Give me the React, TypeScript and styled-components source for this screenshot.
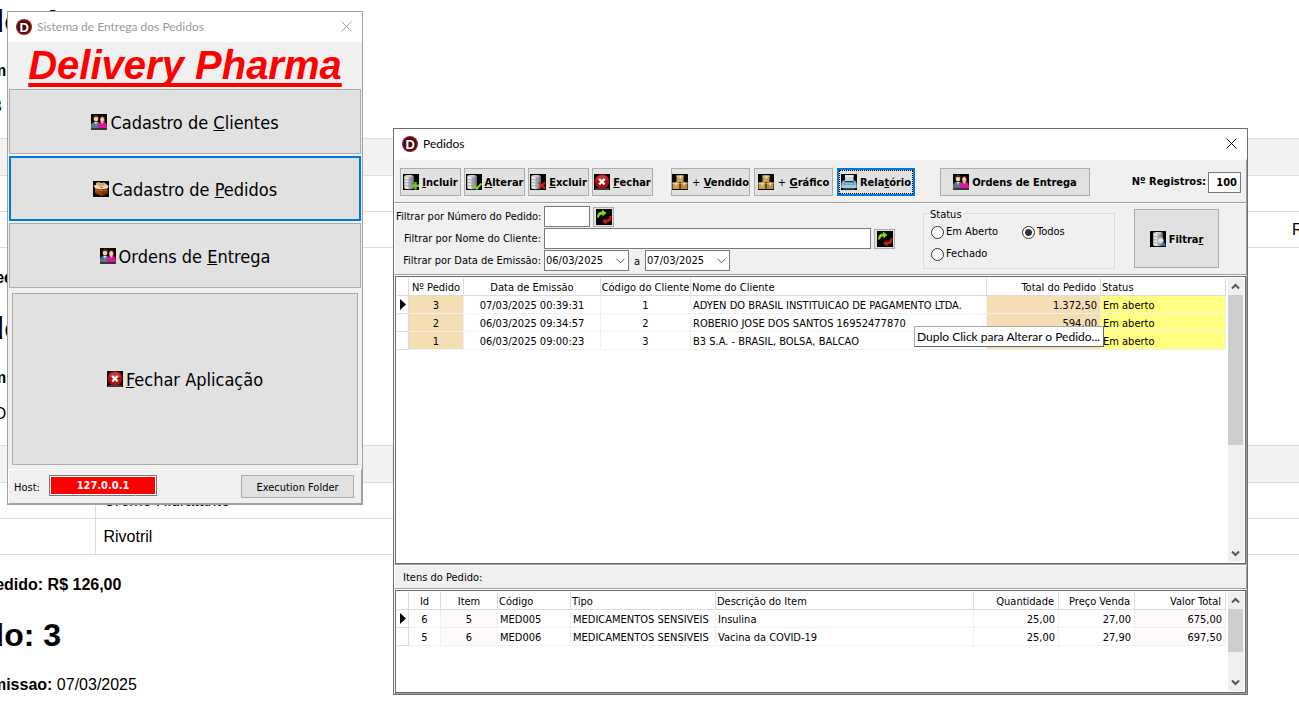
import React from 'react';
import styled, { createGlobalStyle, css } from 'styled-components';

const ui = `"DejaVu Sans Condensed", "DejaVu Sans", sans-serif`;
const titleFont = `Lato, "Open Sans", sans-serif`;
const docFont = `"Liberation Sans", Arial, sans-serif`;

const GlobalStyle = createGlobalStyle`
  * { box-sizing: border-box; }
  html, body, #root { height: 100%; }
  body { margin: 0; background: #fff; color: #000; overflow: hidden; }
  button, input, select { font: inherit; color: inherit; margin: 0; }
`;

const Desktop = styled.main`
  position: relative;
  height: 100%;
  overflow: hidden;
  font: 11px/14px ${ui};
`;

/* ---------- report page behind the windows ---------- */

const Report = styled.article`
  margin-left: -83px;
  margin-right: -83px;
  padding-top: 2px;
  font: 16px/20px ${docFont};
  white-space: nowrap;
`;

const ReportTitle = styled.h1`
  margin: 0 0 21px;
  font-size: 32px;
  line-height: 38px;
`;

const ReportLine = styled.p`
  margin: 0 0 16px;
  padding-left: 2px;
  line-height: 20px;
`;

const ReportTotal = styled(ReportLine)`
  margin-bottom: 21px;
  font-weight: bold;
`;

const ReportTable = styled.table`
  width: 100%;
  margin: 21px 0 20px;
  border-collapse: collapse;
  table-layout: fixed;
  th { height: 37px; background: #f2f2f2; }
  td { height: 36px; }
  th, td {
    padding: 0 8px;
    border-top: 1px solid #ddd;
    border-bottom: 1px solid #ddd;
    text-align: left;
  }
  td:nth-child(2) { border-left: 1px solid #ddd; }
  th:nth-child(1) { width: 178px; }
  th:nth-child(3) { width: 98px; }
`;

/* ---------- window chrome ---------- */

const Window = styled.section`
  position: absolute;
  background: #f0f0f0;
`;

const MenuWindow = styled(Window)`
  left: 7px;
  top: 11px;
  width: 356px;
  border: 1px solid #a0a0a0;
`;

const OrdersWindow = styled(Window)`
  left: 393px;
  right: 51px;
  top: 128px;
  min-width: 780px;
  border: 1px solid #6e6e6e;
`;

const TitleBar = styled.header<{ $inactive?: boolean }>`
  display: flex;
  align-items: center;
  gap: 5px;
  height: 30px;
  padding: 0 8px;
  background: #fff;
  color: ${p => (p.$inactive ? '#999' : '#000')};
  font: 12px/16px ${titleFont};
`;

const TitleText = styled.h2`
  flex: 1;
  margin: 0;
  font: inherit;
`;

const CloseButton = styled.button`
  display: flex;
  align-items: center;
  justify-content: center;
  width: 14px;
  height: 14px;
  padding: 0 2px 2px 0;
  border: 0;
  background: none;
`;

const Panel = styled.div`
  border: 1px solid;
  border-color: #fff #a0a0a0 #a0a0a0 #fff;
`;

/* ---------- buttons and fields ---------- */

const Button = styled.button<{ $active?: boolean }>`
  display: flex;
  align-items: center;
  justify-content: center;
  padding: 0;
  border: 1px solid #adadad;
  background: #e1e1e1;
  white-space: nowrap;
  ${p => p.$active && css`border: 2px solid #0078d7;`}
  > span { padding-top: 2px; }
`;

const MenuButton = styled(Button)`
  width: 100%;
  height: 65px;
  gap: 3px;
  font-size: 18px;
  line-height: 22px;
`;

const QuitButton = styled(MenuButton)`
  height: 172px;
`;

const ToolButton = styled(Button)<{ $width: number }>`
  width: ${p => p.$width}px;
  height: 28px;
  gap: 3px;
  font-weight: bold;
  ${p => p.$active && css`outline: 1px dotted #000; outline-offset: -3px;`}
`;

const ApplyButton = styled(Button)`
  width: 85px;
  height: 59px;
  gap: 3px;
  font-weight: bold;
`;

const RefreshButton = styled(Button)`
  width: 21px;
  height: 20px;
`;

const Plus = styled.span`
  margin-left: 1px;
  font-weight: normal;
`;

const Field = styled.input`
  height: 21px;
  padding: 0 3px;
  border: 1px solid #7a7a7a;
  border-radius: 0;
  background: #fff;
  outline: 0;
`;

/* ---------- menu window ---------- */

const Banner = styled.h1`
  height: 47px;
  margin: 0;
  color: #f00;
  text-align: center;
  font: italic bold 40px/46px ${docFont};
  text-decoration: underline;
  text-decoration-thickness: 4px;
  text-underline-offset: 4px;
  text-decoration-skip-ink: none;
`;

const MenuList = styled.nav`
  display: flex;
  flex-direction: column;
  gap: 2px;
  padding: 0 1px;
`;

const QuitArea = styled.div`
  padding: 5px 4px 4px;
`;

const MenuFooter = styled(Panel)`
  display: flex;
  align-items: flex-start;
  height: 35px;
  padding: 5px 7px 0 5px;
`;

const HostLabel = styled.label`
  width: 35px;
  padding-top: 1px;
  line-height: 23px;
`;

const HostField = styled(Field)`
  width: 108px;
  padding: 0;
  color: #fff;
  background: #f00;
  box-shadow: inset 0 0 0 1px #fff;
  text-align: center;
  font-weight: bold;
`;

const FolderButton = styled(Button)`
  width: 113px;
  height: 23px;
  margin-left: auto;
`;

/* ---------- orders window ---------- */

const Toolbar = styled(Panel)`
  display: flex;
  align-items: center;
  height: 44px;
  padding: 2px 5px 0 5px;
`;

const ToolGroup = styled.div<{ $gap: number; $after: number }>`
  display: flex;
  gap: ${p => p.$gap}px;
  margin-right: ${p => p.$after}px;
`;

const Records = styled.label`
  display: flex;
  align-items: center;
  gap: 2px;
  margin-left: auto;
  font-weight: bold;
`;

const RecordsField = styled(Field)`
  width: 33px;
  text-align: right;
  font-weight: bold;
`;

const Filters = styled(Panel)`
  display: flex;
  height: 72px;
  padding: 2px 27px 0 1px;
`;

const FilterForm = styled.div`
  flex: 1;
  display: flex;
  flex-direction: column;
  gap: 1px;
  margin-right: 28px;
`;

const FilterRow = styled.div`
  display: flex;
  align-items: center;
  gap: 3px;
  height: 21px;
`;

const FilterLabel = styled.label`
  width: 145px;
  text-align: right;
  white-space: nowrap;
`;

const NumberField = styled(Field)`
  width: 46px;
`;

const NameField = styled(Field)`
  flex: 1;
  min-width: 0;
`;

const DateBox = styled.div`
  position: relative;
  width: 85px;
  height: 21px;
  svg { position: absolute; right: 4px; top: 8px; pointer-events: none; }
`;

const DateSelect = styled.select`
  width: 100%;
  height: 100%;
  padding: 1px 1px 0;
  border: 1px solid #7a7a7a;
  border-radius: 0;
  background: #fff;
  appearance: none;
`;

const DateJoin = styled.label`
  padding: 2px 2px 0;
`;

const StatusGroup = styled.fieldset`
  position: relative;
  display: grid;
  grid-template-columns: 91px auto;
  grid-auto-rows: 22px;
  justify-content: start;
  width: 192px;
  height: 56px;
  margin: 7px 19px 0 0;
  padding: 7px 7px 0;
  border: 1px solid #dcdcdc;
`;

const StatusLegend = styled.span`
  position: absolute;
  left: 5px;
  top: -6px;
  padding: 0 1px;
  background: #f0f0f0;
  line-height: 14px;
`;

const Option = styled.label`
  display: flex;
  align-items: center;
  gap: 2px;
`;

const Radio = styled.input`
  appearance: none;
  width: 13px;
  height: 13px;
  margin: 0;
  border: 1px solid #333;
  border-radius: 50%;
  background: #fff;
  &:checked { background: radial-gradient(circle, #333 0 3px, #fff 4px); }
`;

const ApplyArea = styled.div`
  padding-top: 3px;
`;

const ItemsHeading = styled(Panel)`
  height: 24px;
  padding: 5px 8px 0;
`;

/* ---------- data grids ---------- */

const GridFrame = styled.div<{ $height: number }>`
  position: relative;
  display: flex;
  align-items: flex-start;
  gap: 2px;
  height: ${p => p.$height}px;
  padding: 1px;
  border: 1px solid #696969;
  background: #fff;
`;

const TableArea = styled.div`
  flex: 1;
  min-width: 0;
`;

const DataTable = styled.table`
  width: 100%;
  table-layout: fixed;
  border-collapse: separate;
  border-spacing: 0;
  th, td {
    height: 18px;
    border-right: 1px solid #f0f0f0;
    border-bottom: 1px solid #f0f0f0;
    line-height: 15px;
    white-space: nowrap;
    overflow: hidden;
  }
  th {
    border-color: #dcdcdc;
    font-weight: normal;
  }
`;

type Align = 'left' | 'center' | 'right';

const HeadCell = styled.th<{ $align: Align; $width?: number }>`
  width: ${p => (p.$width ? p.$width + 'px' : 'auto')};
  padding: ${p => (p.$align === 'center' ? '2px 0 0' : '2px 4px 0 1px')};
  text-align: ${p => p.$align};
`;

const BodyCell = styled.td<{ $align: Align; $fill?: string }>`
  padding: ${p => (p.$align === 'center' ? '2px 0 0' : '2px 3px 0 2px')};
  text-align: ${p => p.$align};
  background: ${p => p.$fill || '#fff'};
`;

const MarkerHead = styled.th`
  width: 12px;
  padding: 0;
`;

const MarkerCell = styled.td`
  && { padding: 0 0 0 3px; border-color: #dcdcdc; }
  svg { display: block; }
`;

const ScrollTrack = styled.div`
  display: flex;
  flex-direction: column;
  width: 16px;
  height: 100%;
  background: #f0f0f0;
`;

const ScrollArrow = styled.button`
  display: flex;
  align-items: center;
  justify-content: center;
  width: 15px;
  height: 17px;
  padding: 0;
  border: 0;
  background: none;
`;

const ScrollThumb = styled.div<{ $height: number }>`
  width: 15px;
  height: ${p => p.$height}px;
  margin-bottom: auto;
  background: #cdcdcd;
`;

const Tooltip = styled.div`
  position: absolute;
  top: 49px;
  right: 141px;
  width: 190px;
  height: 21px;
  padding: 0 2px;
  border: 1px solid;
  border-color: #a8a8a8 #646464 #646464 #a8a8a8;
  background: #fff;
  font: 12px/20px ${titleFont};
  white-space: nowrap;
`;

/* ---------- icons ---------- */

const Icon = ({ children }: { children: React.ReactNode }) => (
  <svg width="16" height="16" viewBox="0 0 16 16" aria-hidden="true">
    <rect width="16" height="16" fill="#050505" />
    {children}
  </svg>
);

const LogoIcon = () => (
  <svg width="16" height="16" viewBox="0 0 16 16" aria-hidden="true">
    <circle cx="8" cy="8" r="8" fill="#8e1a22" />
    <circle cx="8" cy="8" r="6.600" fill="#4a0a10" />
    <text x="8.300" y="12.600" textAnchor="middle" fontFamily="Liberation Sans" fontWeight="bold" fontSize="13" fill="#fff">D</text>
  </svg>
);

const PeopleIcon = () => (
  <Icon>
    <path d="M0 14.500V12Q0 8.500 3 8h4q2 .5 2 3v3.500z" fill="#5f7182" />
    <path d="M3.500 8h3l-1.500 4z" fill="#f4f6f8" />
    <path d="M4.700 8.500h.8l.4 3-.8 1-.8-1z" fill="#3d86c8" />
    <ellipse cx="5" cy="4.600" rx="2.300" ry="3" fill="#f3cfae" />
    <path d="M2.500 4.500Q2 1 5 1t2.700 3.300Q6.500 2.700 4.500 3 3 3 2.500 4.500z" fill="#4b2f1d" />
    <path d="M9 7Q8.500 2 11.500 2t2.500 6h-5z" fill="#7a2d18" />
    <path d="M7 14q-.5-5.300 3-6h3q3 .7 3 6z" fill="#d8169b" />
    <ellipse cx="11.200" cy="5.600" rx="1.900" ry="2.600" fill="#f7c9a5" />
    <path d="M10 8h2.600l-1.300 2z" fill="#f7c9a5" />
    <path d="M0 14.200h16V16H0z" fill="#3a3a3a" />
  </Icon>
);

const BoxIcon = () => (
  <Icon>
    <path d="M3 2l3-1 2 1 3-.5 3 2v4H3z" fill="#e3bd7d" />
    <path d="M5 2.500l2 1M9 2l2 2M7 5l2-2" stroke="#b8843f" fill="none" />
    <path d="M2 6h12.500v6L8.500 15 2 12z" fill="#9a4312" />
    <path d="M8.500 7.500L14.500 6v6l-6 3z" fill="#7c300b" />
    <path d="M.5 4.500L3 4l5.500 3L14 4l1.800 1-1.800 2.500-5.500.7-6-.7z" fill="#f0dfcd" />
    <path d="M3 9h11v1H3z" fill="#c3641f" />
  </Icon>
);

const CloseRedIcon = () => (
  <Icon>
    <path d="M1 14h14v2H1z" fill="#3c3c3c" />
    <circle cx="8" cy="7.500" r="7.300" fill="#a80f16" />
    <path d="M2 5.500a6.400 6.400 0 0 1 12 0Q8 8.500 2 5.500z" fill="#c43a3c" />
    <path d="M5.200 5l5.400 5.400M10.600 5l-5.400 5.400" stroke="#fff" strokeWidth="2.200" />
  </Icon>
);

const Database = () => (
  <>
    <path d="M1 2q5-2 9.500 0v12.500Q6 16 1 14.500z" fill="#a9a9a9" />
    <path d="M2 2.500h3.500v12.500L2 14.500z" fill="#e9e9e9" />
    <path d="M8.500 2.500h2v12l-2 .5z" fill="#808080" />
    <path d="M1 2q5-2 9.500 0Q6 3.600 1 2z" fill="#d8d8d8" />
    <path d="M1.500 5.500q4.500 1 9 0M1.500 8.500q4.500 1 9 0M1.500 11.500q4.500 1 9 0" stroke="#8c8c8c" strokeWidth=".7" fill="none" />
  </>
);

const DbAddIcon = () => (
  <Icon><Database /><path d="M12.500 8v7.500M8.700 11.800h7.300" stroke="#6fc72c" strokeWidth="2.400" /></Icon>
);

const DbEditIcon = () => (
  <Icon><Database /><path d="M8 12l2.800 2.700L15.500 9.500" stroke="#76d832" strokeWidth="2" fill="none" /></Icon>
);

const DbRemoveIcon = () => (
  <Icon><Database /><path d="M9 8.500l6 6M15 8.500l-6 6" stroke="#c92222" strokeWidth="2.200" /></Icon>
);

const DbSearchIcon = () => (
  <Icon>
    <g transform="translate(2 0)"><Database /></g>
    <circle cx="10.500" cy="9.500" r="2.800" fill="#dde3e6" stroke="#b4babd" />
    <path d="M12.800 12l2.400 2.800" stroke="#2c86c9" strokeWidth="2" />
  </Icon>
);

const BoxesIcon = () => (
  <Icon>
    <path d="M4.500 1.500h7V8h-7z" fill="#c99f55" />
    <path d="M4.500 1.500h7v1.300h-7z" fill="#e8c987" />
    <path d="M.5 8.500h7V15h-7z" fill="#c99f55" />
    <path d="M.5 8.500h7v1.300h-7z" fill="#e8c987" />
    <path d="M8.500 8.500h7V15h-7z" fill="#b98b3f" />
    <path d="M8.500 8.500h7v1.300h-7z" fill="#dfbd78" />
    <path d="M7.500 1.500h1.500v3H7.500zM3.500 8.500H5v3H3.500zM11.500 8.500H13v3h-1.500z" fill="#f4e2b8" />
  </Icon>
);

const PrinterIcon = () => (
  <Icon>
    <path d="M4 1h8.500v6H4z" fill="#cfd2d5" />
    <path d="M4 1h8.500v2H4z" fill="#e6e8ea" />
    <path d="M2 6.500h2V8h8.500V6.500h1.500L15.500 9v5H.5V9z" fill="#86b4d6" />
    <path d="M3.500 7.500h9.500v3H3.500z" fill="#2f6f9f" />
    <path d="M4 8.500h8.500v2H4z" fill="#7fc4ee" />
    <path d="M.5 11h15v3H.5z" fill="#a9c5da" />
    <path d="M2 14h12v1.500H2z" fill="#3d4d59" />
  </Icon>
);

const RefreshIcon = () => (
  <Icon>
    <path d="M1 8.500Q1 2.500 6 2.500V.5L10.500 4 6.500 7.500V5.500Q3.500 5.500 3 8.500z" fill="#7fd51c" />
    <path d="M15.500 7q.5 6.500-5 6.500v2L6 12.500 10 9v2q3 0 3.500-4z" fill="#c01c1c" />
  </Icon>
);

const CrossIcon = () => (
  <svg width="11" height="11" viewBox="0 0 11 11" aria-hidden="true">
    <path d="M.5.5l10 10M10.500.5l-10 10" stroke="currentColor" fill="none" />
  </svg>
);

const ComboChevron = () => (
  <svg width="9" height="6" viewBox="0 0 9 6" aria-hidden="true">
    <path d="M.5.8l4 4 4-4" stroke="#555" fill="none" />
  </svg>
);

const ScrollChevron = ({ down }: { down?: boolean }) => (
  <svg width="9" height="7" viewBox="0 0 9 7" aria-hidden="true">
    <path d={down ? 'M1 1.500l3.500 3.500L8 1.500' : 'M1 5.500L4.500 2 8 5.500'} stroke="#555" strokeWidth="2" fill="none" />
  </svg>
);

const RowMarker = () => (
  <svg width="6" height="11" viewBox="0 0 6 11" aria-hidden="true">
    <path d="M0 0l6 5.500L0 11z" fill="#000" />
  </svg>
);

/* ---------- data ---------- */

type Column = { title: string; align: Align; width?: number; fill?: string };

const orderColumns: Column[] = [
  { title: 'Nº Pedido', align: 'center', width: 55, fill: '#f5deb3' },
  { title: 'Data de Emissão', align: 'center', width: 137 },
  { title: 'Código do Cliente', align: 'center', width: 90 },
  { title: 'Nome do Cliente', align: 'left' },
  { title: 'Total do Pedido', align: 'right', width: 114, fill: '#f5deb3' },
  { title: 'Status', align: 'left', width: 125, fill: '#ffff80' },
];

const orders = [
  ['3', '07/03/2025 00:39:31', '1', 'ADYEN DO BRASIL INSTITUICAO DE PAGAMENTO LTDA.', '1.372,50', 'Em aberto'],
  ['2', '06/03/2025 09:34:57', '2', 'ROBERIO JOSE DOS SANTOS 16952477870', '594,00', 'Em aberto'],
  ['1', '06/03/2025 09:00:23', '3', 'B3 S.A. - BRASIL, BOLSA, BALCAO', '', 'Em aberto'],
];

const itemColumns: Column[] = [
  { title: 'Id', align: 'center', width: 32 },
  { title: 'Item', align: 'center', width: 57, fill: '#fffafa' },
  { title: 'Código', align: 'left', width: 73 },
  { title: 'Tipo', align: 'left', width: 145 },
  { title: 'Descrição do Item', align: 'left' },
  { title: 'Quantidade', align: 'right', width: 85 },
  { title: 'Preço Venda', align: 'right', width: 76 },
  { title: 'Valor Total', align: 'right', width: 91, fill: '#fffafa' },
];

const items = [
  ['6', '5', 'MED005', 'MEDICAMENTOS SENSIVEIS', 'Insulina', '25,00', '27,00', '675,00'],
  ['5', '6', 'MED006', 'MEDICAMENTOS SENSIVEIS', 'Vacina da COVID-19', '25,00', '27,90', '697,50'],
];

/* ---------- composed parts ---------- */

const Grid = ({ columns, rows, height, thumb, children }: {
  columns: Column[]; rows: string[][]; height: number; thumb: number; children?: React.ReactNode;
}) => (
  <GridFrame $height={height}>
    <TableArea>
      <DataTable>
        <thead>
          <tr>
            <MarkerHead />
            {columns.map(c => <HeadCell key={c.title} $align={c.align} $width={c.width}>{c.title}</HeadCell>)}
          </tr>
        </thead>
        <tbody>
          {rows.map((row, r) => (
            <tr key={r}>
              <MarkerCell>{r === 0 && <RowMarker />}</MarkerCell>
              {row.map((value, i) => (
                <BodyCell key={i} $align={columns[i].align} $fill={columns[i].fill}>{value}</BodyCell>
              ))}
            </tr>
          ))}
        </tbody>
      </DataTable>
    </TableArea>
    <ScrollTrack>
      <ScrollArrow type="button" aria-label="Subir"><ScrollChevron /></ScrollArrow>
      <ScrollThumb $height={thumb} />
      <ScrollArrow type="button" aria-label="Descer"><ScrollChevron down /></ScrollArrow>
    </ScrollTrack>
    {children}
  </GridFrame>
);

const DateCombo = ({ id, value }: { id: string; value: string }) => (
  <DateBox>
    <DateSelect id={id} defaultValue={value}>
      <option>{value}</option>
    </DateSelect>
    <ComboChevron />
  </DateBox>
);

const ReportItems = ({ rows }: { rows: string[][] }) => (
  <ReportTable>
    <thead><tr><th /><th /><th /></tr></thead>
    <tbody>
      {rows.map((r, i) => <tr key={i}><td /><td>{r[0]}</td><td>{r[1]}</td></tr>)}
    </tbody>
  </ReportTable>
);

export default function App() {
  return (
    <Desktop>
      <GlobalStyle />
      <Report>
        <ReportTitle>Pedido: 1</ReportTitle>
        <ReportLine><b>Data de Emissao:</b></ReportLine>
        <ReportLine><b>Cliente:</b> B3 S.A.</ReportLine>
        <ReportItems rows={[['', ''], ['', 'R$']]} />
        <ReportTotal>Total do Pedido:</ReportTotal>

        <ReportTitle>Pedido: 2</ReportTitle>
        <ReportLine><b>Data de Emissao:</b></ReportLine>
        <ReportLine><b>Cliente:</b> ROBERIO</ReportLine>
        <ReportItems rows={[['Creme Hidratante', ''], ['Rivotril', '']]} />
        <ReportTotal>Total do Pedido: R$ 126,00</ReportTotal>

        <ReportTitle>Pedido: 3</ReportTitle>
        <ReportLine><b>Data de Emissao:</b> 07/03/2025</ReportLine>
      </Report>

      <MenuWindow>
        <TitleBar $inactive>
          <LogoIcon />
          <TitleText>Sistema de Entrega dos Pedidos</TitleText>
          <CloseButton type="button" aria-label="Fechar janela"><CrossIcon /></CloseButton>
        </TitleBar>
        <Banner>Delivery Pharma</Banner>
        <MenuList>
          <MenuButton type="button"><PeopleIcon /><span>Cadastro de <u>C</u>lientes</span></MenuButton>
          <MenuButton type="button" $active><BoxIcon /><span>Cadastro de <u>P</u>edidos</span></MenuButton>
          <MenuButton type="button"><PeopleIcon /><span>Ordens de <u>E</u>ntrega</span></MenuButton>
        </MenuList>
        <QuitArea>
          <QuitButton type="button"><CloseRedIcon /><span><u>F</u>echar Aplicação</span></QuitButton>
        </QuitArea>
        <MenuFooter>
          <HostLabel htmlFor="host">Host:</HostLabel>
          <HostField id="host" defaultValue="127.0.0.1" />
          <FolderButton type="button"><span>Execution Folder</span></FolderButton>
        </MenuFooter>
      </MenuWindow>

      <OrdersWindow>
        <TitleBar>
          <LogoIcon />
          <TitleText>Pedidos</TitleText>
          <CloseButton type="button" aria-label="Fechar janela"><CrossIcon /></CloseButton>
        </TitleBar>

        <Toolbar>
          <ToolGroup $gap={3} $after={18}>
            <ToolButton type="button" $width={61}><DbAddIcon /><span><u>I</u>ncluir</span></ToolButton>
            <ToolButton type="button" $width={61}><DbEditIcon /><span><u>A</u>lterar</span></ToolButton>
            <ToolButton type="button" $width={61}><DbRemoveIcon /><span><u>E</u>xcluir</span></ToolButton>
            <ToolButton type="button" $width={61}><CloseRedIcon /><span><u>F</u>echar</span></ToolButton>
          </ToolGroup>
          <ToolGroup $gap={4} $after={25}>
            <ToolButton type="button" $width={79}><BoxesIcon /><span><Plus>+</Plus> <u>V</u>endido</span></ToolButton>
            <ToolButton type="button" $width={79}><BoxesIcon /><span><Plus>+</Plus> <u>G</u>ráfico</span></ToolButton>
            <ToolButton type="button" $width={78} $active><PrinterIcon /><span>Rela<u>t</u>ório</span></ToolButton>
          </ToolGroup>
          <ToolButton type="button" $width={150}><PeopleIcon /><span>Ordens de Entrega</span></ToolButton>
          <Records>
            Nº Registros:
            <RecordsField defaultValue="100" />
          </Records>
        </Toolbar>

        <Filters>
          <FilterForm>
            <FilterRow>
              <FilterLabel htmlFor="numero">Filtrar por Número do Pedido:</FilterLabel>
              <NumberField id="numero" />
              <RefreshButton type="button" aria-label="Filtrar por número"><RefreshIcon /></RefreshButton>
            </FilterRow>
            <FilterRow>
              <FilterLabel htmlFor="nome">Filtrar por Nome do Cliente:</FilterLabel>
              <NameField id="nome" />
              <RefreshButton type="button" aria-label="Filtrar por nome"><RefreshIcon /></RefreshButton>
            </FilterRow>
            <FilterRow>
              <FilterLabel htmlFor="inicio">Filtrar por Data de Emissão:</FilterLabel>
              <DateCombo id="inicio" value="06/03/2025" />
              <DateJoin htmlFor="fim">a</DateJoin>
              <DateCombo id="fim" value="07/03/2025" />
            </FilterRow>
          </FilterForm>
          <StatusGroup aria-label="Status">
            <StatusLegend>Status</StatusLegend>
            <Option><Radio type="radio" name="status" />Em Aberto</Option>
            <Option><Radio type="radio" name="status" defaultChecked />Todos</Option>
            <Option><Radio type="radio" name="status" />Fechado</Option>
          </StatusGroup>
          <ApplyArea>
            <ApplyButton type="button"><DbSearchIcon /><span>Filtra<u>r</u></span></ApplyButton>
          </ApplyArea>
        </Filters>

        <Panel>
          <Grid columns={orderColumns} rows={orders} height={288} thumb={150}>
            <Tooltip role="tooltip">Duplo Click para Alterar o Pedido...</Tooltip>
          </Grid>
        </Panel>
        <ItemsHeading>Itens do Pedido:</ItemsHeading>
        <Panel>
          <Grid columns={itemColumns} rows={items} height={103} thumb={43} />
        </Panel>
      </OrdersWindow>
    </Desktop>
  );
}
